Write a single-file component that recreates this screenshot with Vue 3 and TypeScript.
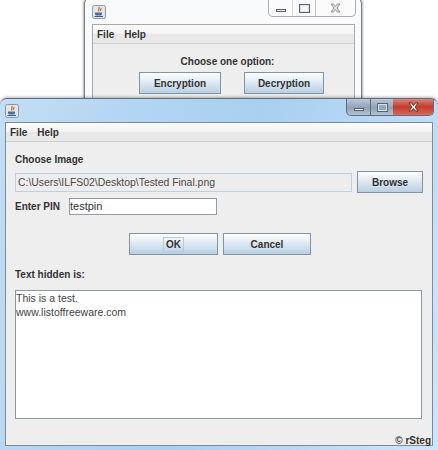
<template>
  <div class="desktop">
    <!-- window behind -->
    <section class="window back">
      <header class="titlebar back-title">
        <JavaIcon />
        <div class="controls inactive">
          <span class="ctl min"><i></i></span>
          <span class="ctl max"><i></i></span>
          <span class="ctl close">
            <svg width="13" height="10" viewBox="0 0 13 10"><path d="M2 1h2.500L6.500 3.500 8.500 1H11L8 5l3 4H8.500L6.500 6.500 4.500 9H2l3-4z" fill="#e6e9ec" stroke="#8a9097" stroke-width="1" /></svg>
          </span>
        </div>
      </header>
      <div class="client back-client">
        <nav class="menubar">
          <span v-for="m in menus" :key="m">{{ m }}</span>
        </nav>
        <div class="chooser">
          <p>Choose one option:</p>
          <div class="chooser-row">
            <button class="btn enc">Encryption</button>
            <button class="btn dec">Decryption</button>
          </div>
        </div>
      </div>
    </section>

    <!-- main window -->
    <section class="window front">
      <header class="titlebar front-title">
        <JavaIcon />
        <div class="controls">
          <span class="ctl min"><i></i></span>
          <span class="ctl max"><i></i></span>
          <span class="ctl close">
            <svg width="13" height="10" viewBox="0 0 13 10"><path d="M2 1h2.500L6.500 3.500 8.500 1H11L8 5l3 4H8.500L6.500 6.500 4.500 9H2l3-4z" fill="#fff" stroke="#6e2a22" stroke-width="1" /></svg>
          </span>
        </div>
      </header>
      <div class="client">
        <nav class="menubar">
          <span v-for="m in menus" :key="m">{{ m }}</span>
        </nav>
        <div class="panel">
          <label class="lbl choose">Choose Image</label>
          <div class="path-row">
            <div class="path">{{ imagePath }}</div>
            <button class="btn browse">Browse</button>
          </div>
          <div class="pin-row">
            <label class="lbl">Enter PIN</label>
            <div class="pin">{{ pin }}</div>
          </div>
          <div class="actions">
            <button class="btn action ok"><span class="focus">OK</span></button>
            <button class="btn action">Cancel</button>
          </div>
          <label class="lbl hidden-label">Text hidden is:</label>
          <div class="output">
            <div v-for="line in hiddenText" :key="line">{{ line }}</div>
          </div>
          <div class="credit">© rSteg</div>
        </div>
      </div>
    </section>
  </div>
</template>

<script setup lang="ts">
import { h } from 'vue'

const menus = ['File', 'Help']
const imagePath = 'C:\\Users\\ILFS02\\Desktop\\Tested Final.png'
const pin = 'testpin'
const hiddenText = ['This is a test.', 'www.listoffreeware.com']

// little java cup in the title bar
const JavaIcon = () =>
  h('svg', { class: 'java', width: 14, height: 14, viewBox: '0 0 14 14' }, [
    h('rect', { x: 0.5, y: 0.5, width: 13, height: 13, rx: 2, fill: '#dfe6ee', stroke: '#8d98a6' }),
    h('path', { d: 'M7 2c1 1.500-1.500 2.500 0 4.500M9 3c.5 1-1 1.500-.5 3', stroke: '#d9661f', fill: 'none', 'stroke-width': 1.2 }),
    h('path', { d: 'M3 7.500h7v1.500c0 1-1 1.500-2 1.500H5c-1 0-2-.5-2-1.500z', fill: '#4a6f9c' }),
    h('path', { d: 'M2.500 11.500h8.500', stroke: '#3a5a85', 'stroke-width': 1 })
  ])
</script>

<style>
html,
body {
  margin: 0;
  background: #fff;
}
</style>

<style scoped>
.desktop {
  position: relative;
  width: 438px;
  height: 450px;
  overflow: hidden;
  background: #fff;
  font-family: "Liberation Sans", Arial, sans-serif;
  font-size: 10px;
  color: #333;
}

.window {
  position: absolute;
  box-sizing: border-box;
  display: flex;
  flex-direction: column;
}

.back {
  left: 84px;
  top: -4px;
  width: 278px;
  height: 130px;
  padding: 0 6px 0 7px;
  background: #f9fafb;
  border: 1px solid #7c8085;
  border-radius: 8px 8px 0 0;
  box-shadow: 0 0 2px 1px rgba(0, 0, 0, 0.3);
}

.front {
  left: 0;
  top: 98px;
  width: 438px;
  height: 352px;
  padding: 0 5px 4px;
  border-top: 1px solid #5f6d7c;
  border-radius: 7px 7px 0 0;
  background: linear-gradient(105deg, #c4def5 0%, #b4d6f3 22%, #a9d0f1 50%, #b9d9f5 75%, #cfe6fa 100%);
  box-shadow: 0 -1px 3px rgba(0, 0, 0, 0.3);
}

.titlebar {
  flex: none;
  display: flex;
  justify-content: space-between;
  align-items: flex-start;
}

.back-title {
  height: 27px;
  padding-top: 8px;
  box-sizing: border-box;
}

.front-title {
  height: 23px;
}

.java {
  flex: none;
  margin-top: 5px;
}

.back-title .java {
  margin-top: 0;
}

.controls {
  display: flex;
  height: 16px;
  margin-right: -1px;
  border: 1px solid #5f6d7c;
  border-top: 0;
  border-radius: 0 0 5px 5px;
  overflow: hidden;
  background: linear-gradient(#b8c8d8, #8fa3b6 55%, #b2c2d1);
}

.back-title .controls {
  margin-top: -8px;
  height: 19px;
  margin-right: -1px;
  border-color: #a8adb3;
  background: #fbfbfb;
}

.ctl {
  display: flex;
  align-items: center;
  justify-content: center;
  box-sizing: border-box;
}

.ctl.min {
  width: 24px;
  border-right: 1px solid #5f6d7c;
}

.ctl.max {
  width: 22px;
}

.ctl.close {
  width: 40px;
  background: linear-gradient(#d9847a, #c33b2c 50%, #d66a5c);
}

.back-title .ctl {
  padding-top: 3px;
}

.back-title .ctl.min {
  border-right: 1px solid #d9dcdf;
}

.back-title .ctl.close {
  background: none;
  border-left: 1px solid #c4c8cc;
}

.ctl.min i {
  display: block;
  width: 10px;
  height: 3px;
  margin-top: 5px;
  background: #eef2f5;
  border: 1px solid #59636e;
  box-sizing: border-box;
}

.ctl.max i {
  display: block;
  width: 11px;
  height: 9px;
  box-sizing: border-box;
  border: 2px solid #d8dfe5;
  outline: 1px solid #59636e;
  outline-offset: -1px;
}

.client {
  flex: 1;
  display: flex;
  flex-direction: column;
  background: #eeeeee;
  border: 1px solid #7f8b97;
  min-height: 0;
}

.back-client {
  border-color: #a9a9a9;
}

.menubar {
  flex: none;
  display: flex;
  gap: 10px;
  height: 18px;
  align-items: center;
  padding-left: 4px;
  font-weight: bold;
  color: #333;
  background: linear-gradient(#fbfbfb, #f3f3f3 50%, #e8e8e8 51%, #e9e9e9);
  border-bottom: 1px solid #cfcfcf;
}

.chooser {
  text-align: center;
}

.chooser p {
  margin: 0;
  padding: 11px 0 0 8px;
  line-height: 13px;
  font-weight: bold;
}

.chooser-row {
  display: flex;
  gap: 23px;
  margin-top: 4px;
  padding-left: 46px;
}

.btn {
  font: bold 10px "Liberation Sans", Arial, sans-serif;
  color: #333;
  box-sizing: border-box;
  padding: 0;
  border: 1px solid #8094a8;
  background: linear-gradient(#ffffff, #e2ebf3 42%, #b9cfe2);
}

.enc {
  width: 82px;
  height: 22px;
}

.dec {
  width: 80px;
  height: 22px;
}

.panel {
  flex: 1;
  display: flex;
  flex-direction: column;
  padding: 11px 9px 0 9px;
  min-height: 0;
}

.lbl {
  font-weight: bold;
  line-height: 13px;
  color: #333;
}

.path-row {
  display: flex;
  align-items: center;
  gap: 5px;
  margin-top: 5px;
}

.path {
  box-sizing: border-box;
  width: 337px;
  height: 19px;
  line-height: 17px;
  padding-left: 2px;
  font-size: 10.4px;
  color: #4a4a4a;
  background: #ededed;
  border: 1px solid #bcd0e2;
}

.browse {
  width: 66px;
  height: 22px;
}

.pin-row {
  display: flex;
  align-items: center;
  margin-top: 5px;
}

.pin-row .lbl {
  width: 54px;
}

.pin {
  box-sizing: border-box;
  width: 148px;
  height: 17px;
  line-height: 15px;
  padding-left: 0;
  font-size: 11px;
  color: #333;
  background: #fff;
  border: 1px solid #8f9dab;
}

.actions {
  display: flex;
  gap: 5px;
  margin-top: 18px;
  padding-left: 114px;
}

.action {
  width: 88px;
  height: 22px;
}

.ok {
  width: 89px;
}

.focus {
  padding: 1px 2px;
  border: 1px solid #b6cbe0;
}

.hidden-label {
  margin-top: 13px;
}

.output {
  box-sizing: border-box;
  flex: none;
  height: 129px;
  width: 407px;
  margin-top: 9px;
  padding: 0;
  line-height: 14px;
  font-size: 10.5px;
  color: #444;
  background: #fff;
  border: 1px solid #8a97a5;
}

.credit {
  margin-top: 15px;
  text-align: right;
  margin-right: -8px;
  font-weight: bold;
  line-height: 13px;
  color: #333;
}
</style>
